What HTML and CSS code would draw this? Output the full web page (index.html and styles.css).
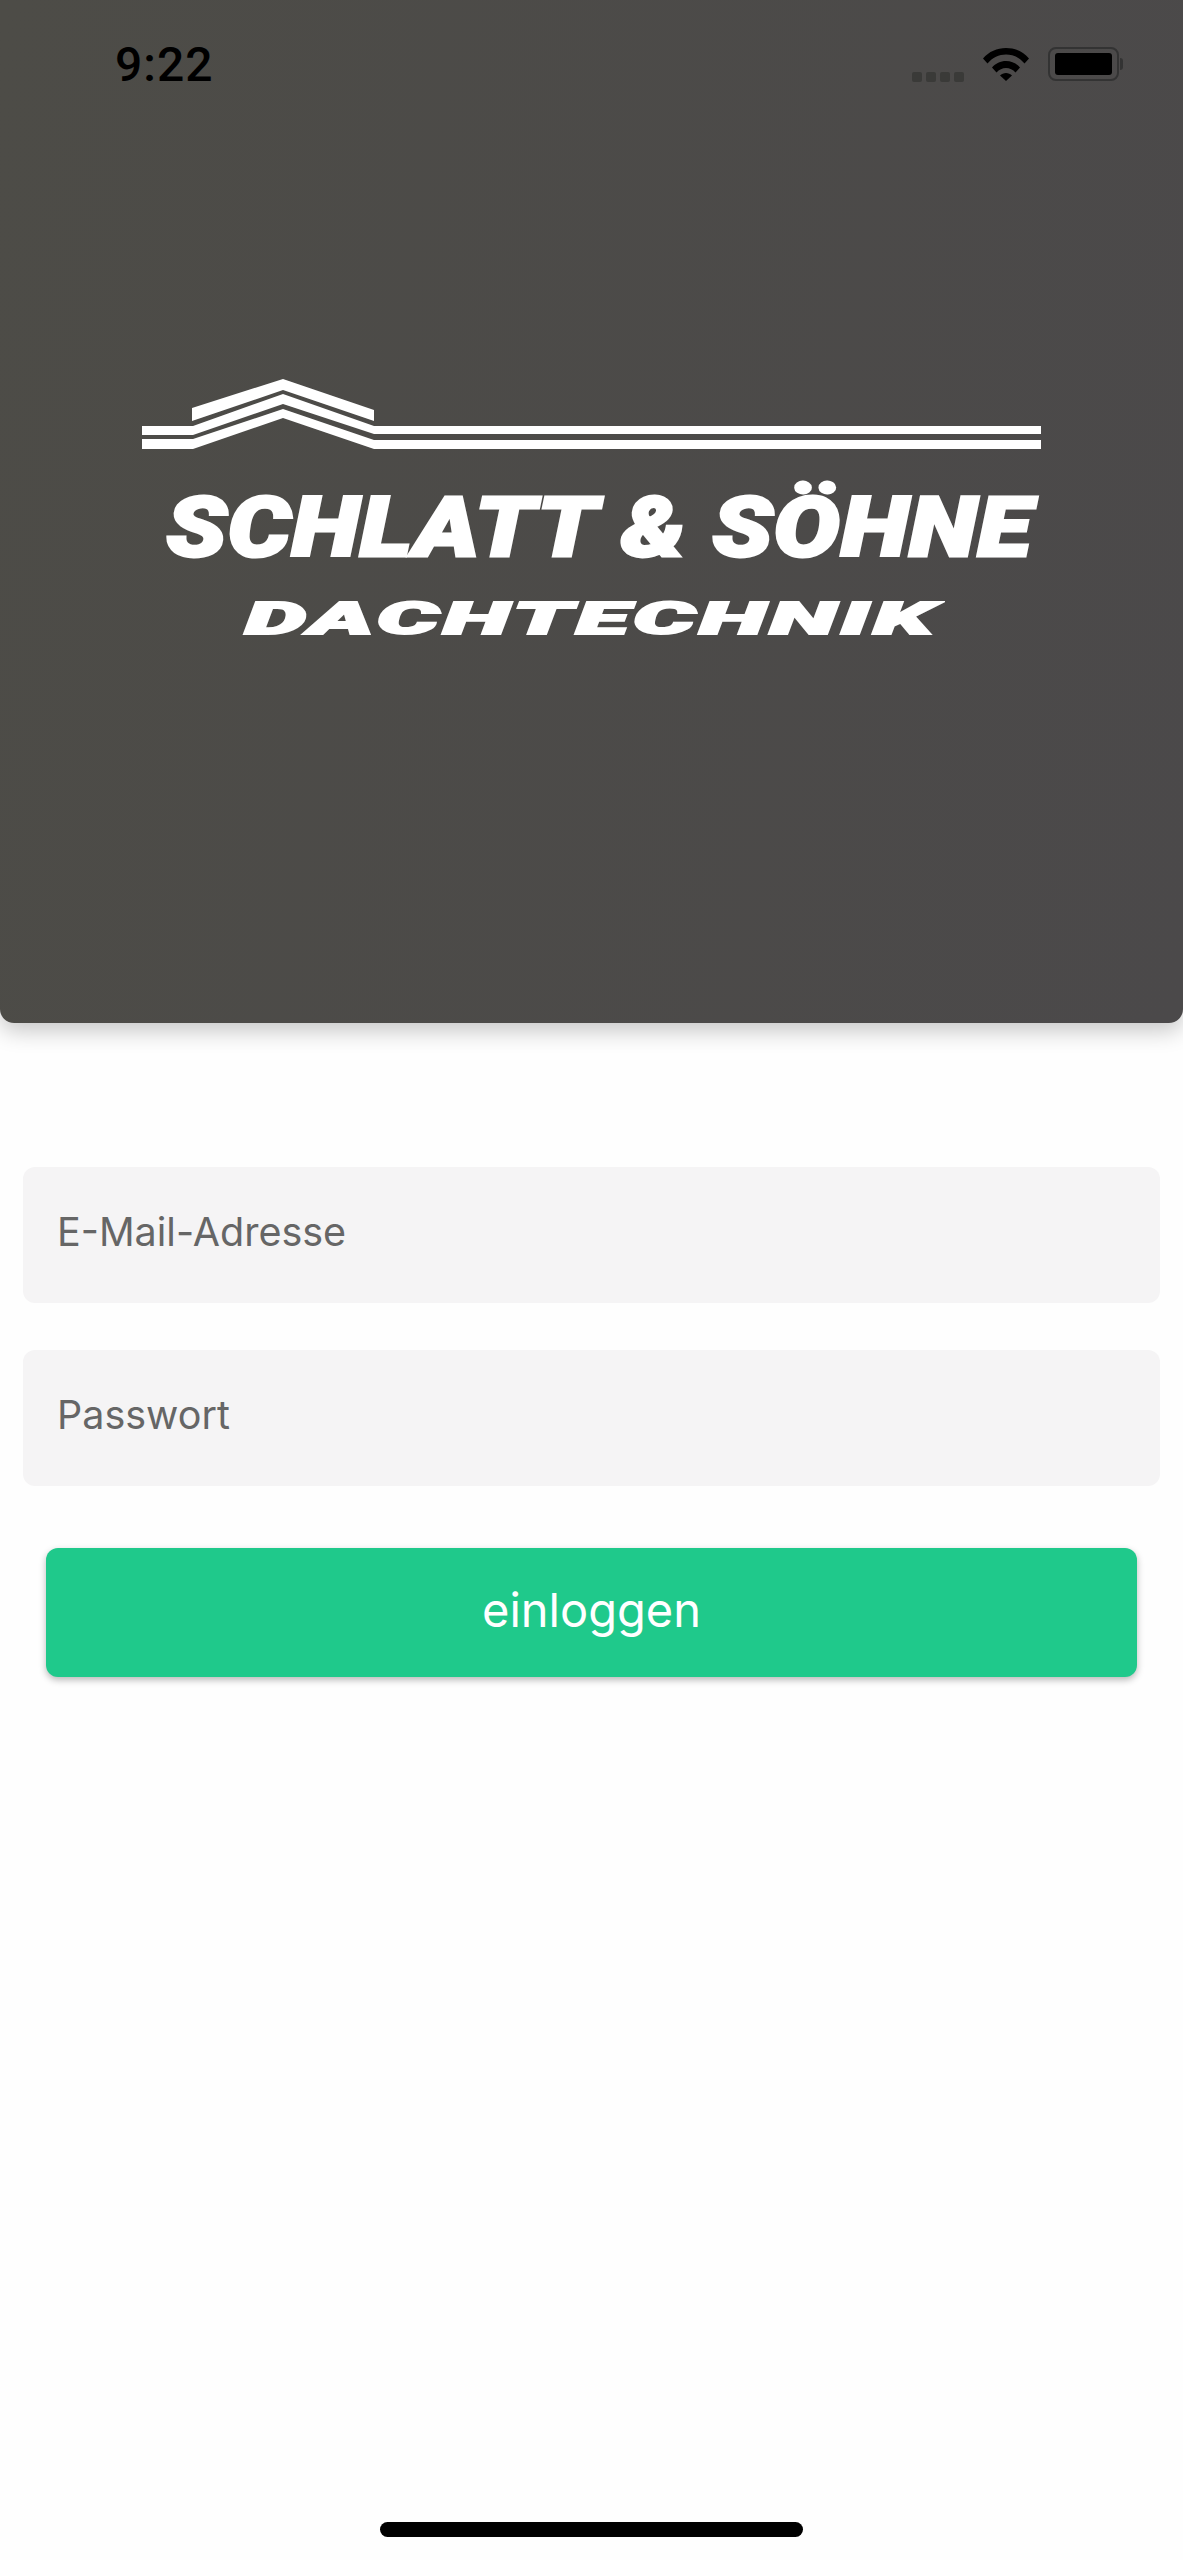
FILE: index.html
```html
<!DOCTYPE html>
<html lang="de">
<head>
  <meta charset="UTF-8">
  <meta name="viewport" content="width=device-width, initial-scale=1">
  <title>Schlatt &amp; Söhne Login</title>
  <link rel="stylesheet" href="styles.css">
</head>
<body>
  <div class="app">
    <div class="header">
      <div class="status-bar">
        <div class="status-time">9:22</div>
        <div class="status-icons">
          <div class="signal">
            <span></span><span></span><span></span><span></span>
          </div>
          <svg class="wifi" viewBox="0 0 46 34">
            <path d="M0 11.500C6 4.500 14 1 23 1s17 3.500 23 10.500l-4.500 5C36.500 10.500 30 7.500 23 7.500S9.500 10.500 4.500 16.500z"/>
            <path d="M9 20.500C12.500 16.500 17.500 14 23 14s10.500 2.500 14 6.500l-4.500 5C30 22.500 26.500 21 23 21s-7 1.500-9.500 4.500z"/>
            <path d="M17 28.500c1.500-1.500 3.800-2.500 6-2.500s4.500 1 6 2.500L23 34z"/>
          </svg>
          <div class="battery">
            <div class="battery-level"></div>
          </div>
        </div>
      </div>

      <div class="logo">
        <svg class="logo-roof" viewBox="0 0 899 70">
          <polygon points="50,29 141,0 232,31 232,42 141,11 50,42"/>
          <polygon points="0,47 51,47 141,15 232,47 899,47 899,55 232,55 141,25 51,56 0,56"/>
          <polygon points="0,60 51,60 141,30 232,61 899,61 899,70 232,70 141,39 51,70 0,70"/>
        </svg>
        <div class="logo-title">SCHLATT &amp; SÖHNE</div>
        <div class="logo-subtitle">DACHTECHNIK</div>
      </div>
    </div>

    <form class="login-form">
      <div class="field">E-Mail-Adresse</div>
      <div class="field">Passwort</div>
      <button class="login-button" type="button">einloggen</button>
    </form>

    <div class="home-indicator"></div>
  </div>
</body>
</html>
```

FILE: styles.css
```css
* {
  box-sizing: border-box;
}

body {
  margin: 0;
  background-color: #fefefe;
  font-family: Inter, "Liberation Sans", sans-serif;
}

.app {
  height: 2560px;
  display: flex;
  flex-direction: column;
  overflow: hidden;
}

.header {
  height: 1023px;
  padding: 46px 64px 0 115px;
  background: linear-gradient(100deg, #4d4c47, #4b494a);
  border-radius: 0 0 14px 14px;
  box-shadow: 0 8px 22px rgba(0, 0, 0, 0.22);
}

.status-bar {
  height: 36px;
  display: flex;
  justify-content: space-between;
  align-items: center;
}

.status-time {
  font-family: Roboto, "Liberation Sans", sans-serif;
  font-size: 48px;
  font-weight: 500;
  letter-spacing: 1px;
  color: #000;
}

.status-icons {
  display: flex;
  align-items: center;
}

.signal {
  display: flex;
  gap: 4px;
  margin-top: 25px;
  margin-right: 19px;
}

.signal span {
  width: 10px;
  height: 10px;
  background-color: #3a3a38;
  border-radius: 2px;
}

.wifi {
  width: 46px;
  height: 34px;
  margin-right: 19px;
  fill: #000;
}

.battery {
  width: 71px;
  height: 34px;
  padding: 4px 5px;
  border: 2px solid #333;
  border-radius: 8px;
  position: relative;
}

.battery::after {
  content: "";
  position: absolute;
  top: 9px;
  right: -6px;
  width: 3px;
  height: 12px;
  background-color: #333;
  border-radius: 0 3px 3px 0;
}

.battery-level {
  height: 100%;
  background-color: #000;
  border-radius: 3px;
}

.logo {
  width: 899px;
  margin: 297px 0 0 27px;
  display: flex;
  flex-direction: column;
  align-items: center;
}

.logo-roof {
  display: block;
  width: 899px;
  height: 70px;
  fill: #fff;
}

.logo-title,
.logo-subtitle {
  font-family: Roboto, "Liberation Sans", sans-serif;
  font-weight: 900;
  font-style: italic;
  color: #fff;
  white-space: nowrap;
  line-height: 1;
}

.logo-title {
  margin-top: 37px;
  margin-left: 17px;
  font-size: 84px;
  letter-spacing: 1px;
  -webkit-text-stroke: 3px #fff;
  transform: scaleX(1.175);
}

.logo-subtitle {
  margin-top: 26px;
  font-size: 45px;
  letter-spacing: 2px;
  -webkit-text-stroke: 2px #fff;
  transform: scaleX(2.16);
}

.login-form {
  padding: 144px 23px 0;
  display: flex;
  flex-direction: column;
  gap: 47px;
}

.field {
  height: 136px;
  padding: 0 34px 6px;
  display: flex;
  align-items: center;
  background-color: #f5f4f5;
  border-radius: 12px;
  font-size: 39.500px;
  color: #666;
}

.login-button {
  height: 129px;
  margin: 15px 23px 0;
  padding: 0 0 7px;
  border: none;
  border-radius: 12px;
  background-color: #1fc98b;
  box-shadow: 0 3px 7px rgba(0, 0, 0, 0.28);
  font-family: Inter, "Liberation Sans", sans-serif;
  font-size: 47px;
  color: #fff;
}

.home-indicator {
  width: 423px;
  height: 15px;
  margin: auto auto 23px;
  background-color: #000;
  border-radius: 8px;
}
```
